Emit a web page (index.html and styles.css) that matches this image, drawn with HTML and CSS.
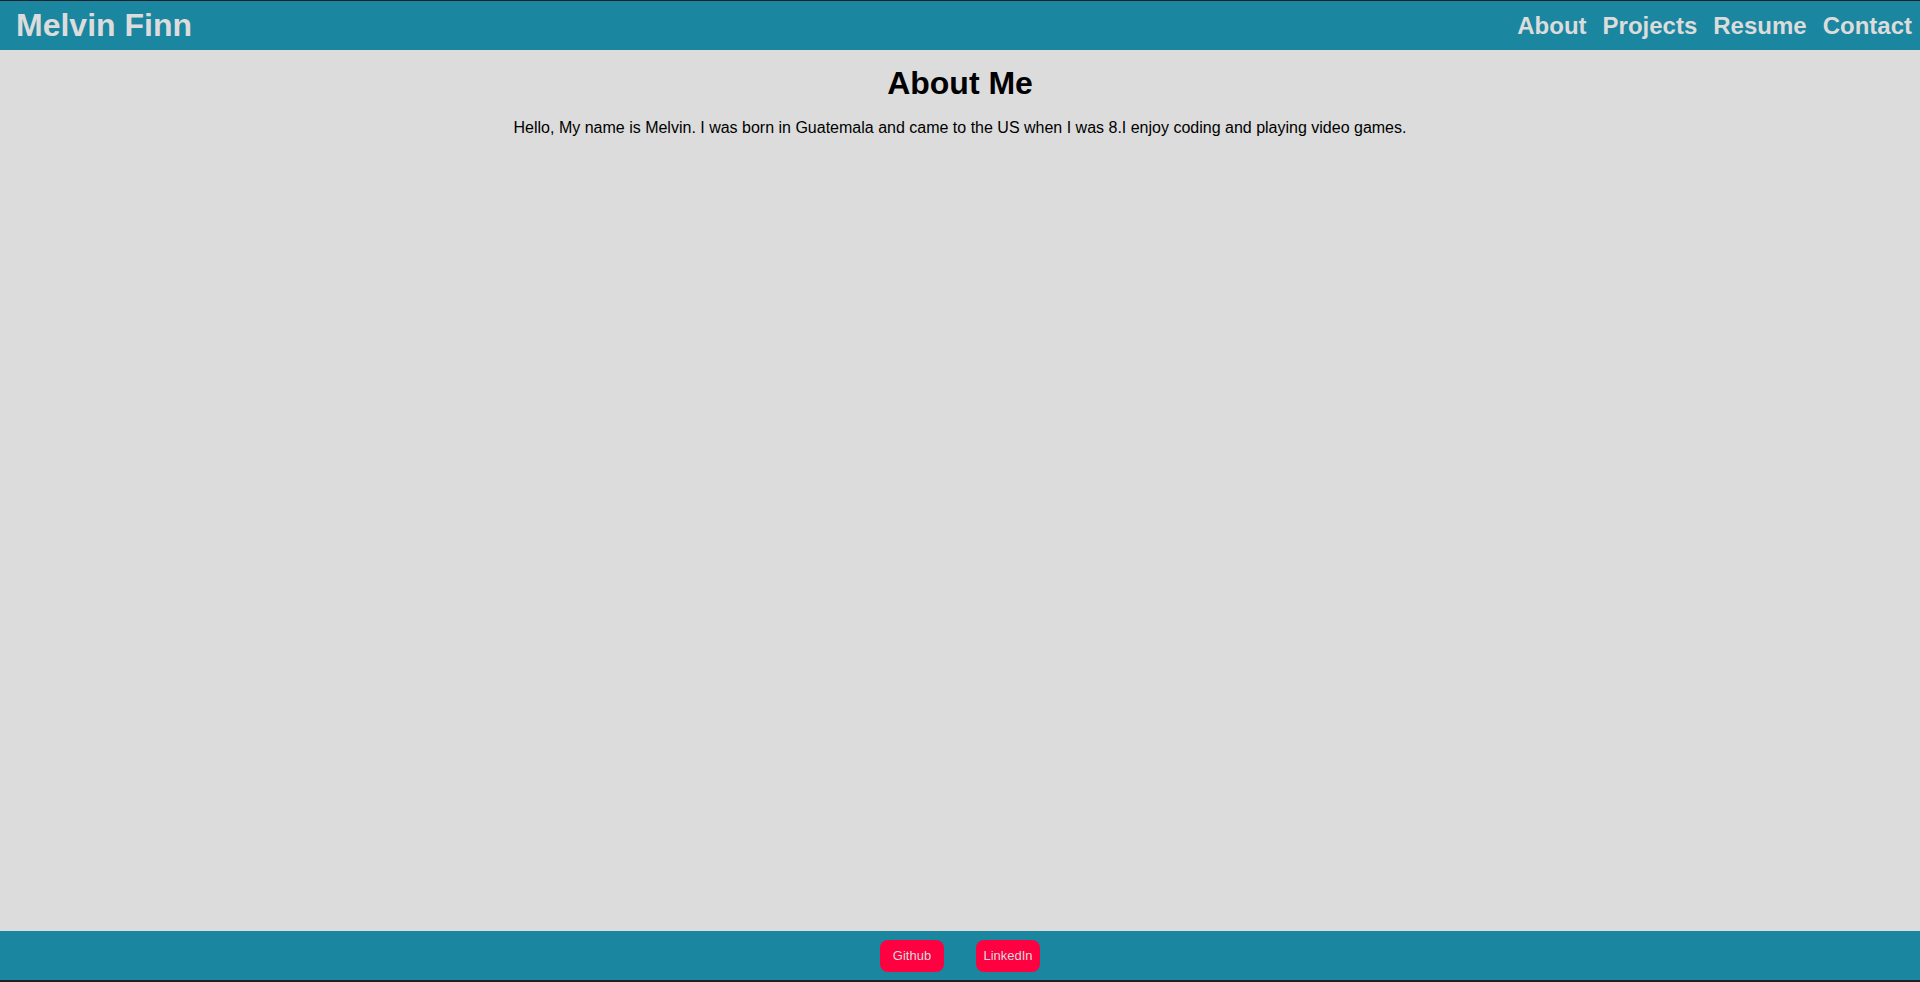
FILE: index.html
```html
<!DOCTYPE html>
<html lang="en">
<head>
<meta charset="utf-8">
<title>Melvin Finn</title>
<link rel="stylesheet" href="styles.css">
</head>
<body>
<header class="site-header">
  <div class="brand">Melvin Finn</div>
  <nav class="nav">
    <a class="nav-link" href="#about">About</a>
    <a class="nav-link" href="#projects">Projects</a>
    <a class="nav-link" href="#resume">Resume</a>
    <a class="nav-link" href="#contact">Contact</a>
  </nav>
</header>
<main class="content" id="about">
  <h1 class="title">About Me</h1>
  <p class="bio">Hello, My name is Melvin. I was born in Guatemala and came to the US when I was 8.I enjoy coding and playing video games.</p>
</main>
<footer class="site-footer">
  <a class="btn" href="#github">Github</a>
  <a class="btn" href="#linkedin">LinkedIn</a>
</footer>
</body>
</html>
```
FILE: styles.css
```css
* {
  box-sizing: border-box;
}
html, body {
  height: 100%;
}
body {
  margin: 0;
  display: flex;
  flex-direction: column;
  background: #dcdcdc;
  font-family: "Liberation Sans", Arial, sans-serif;
  color: #000;
  border-top: 1px solid #202124;
  border-bottom: 2px solid #202124;
}
.site-header {
  height: 49px;
  flex: none;
  display: flex;
  align-items: center;
  justify-content: space-between;
  background: #1b86a0;
  padding: 0 0 0 16px;
}
.brand {
  font-size: 32px;
  font-weight: bold;
  color: #dcdcdc;
}
.nav {
  display: flex;
  align-items: center;
}
.nav-link {
  font-size: 24px;
  font-weight: bold;
  color: #dcdcdc;
  text-decoration: none;
  padding: 0 8px;
}
.content {
  flex: 1;
  text-align: center;
  padding-top: 15px;
}
.title {
  font-size: 32px;
  font-weight: bold;
  margin: 0;
}
.bio {
  font-size: 16px;
  margin: 17px 0 0;
}
.site-footer {
  height: 49px;
  flex: none;
  display: flex;
  align-items: center;
  justify-content: center;
  gap: 32px;
  background: #1b86a0;
}
.btn {
  width: 64px;
  height: 32px;
  display: flex;
  align-items: center;
  justify-content: center;
  border-radius: 8px;
  background: #ff0040;
  color: #dcdcdc;
  font-size: 13px;
  text-decoration: none;
}
```
